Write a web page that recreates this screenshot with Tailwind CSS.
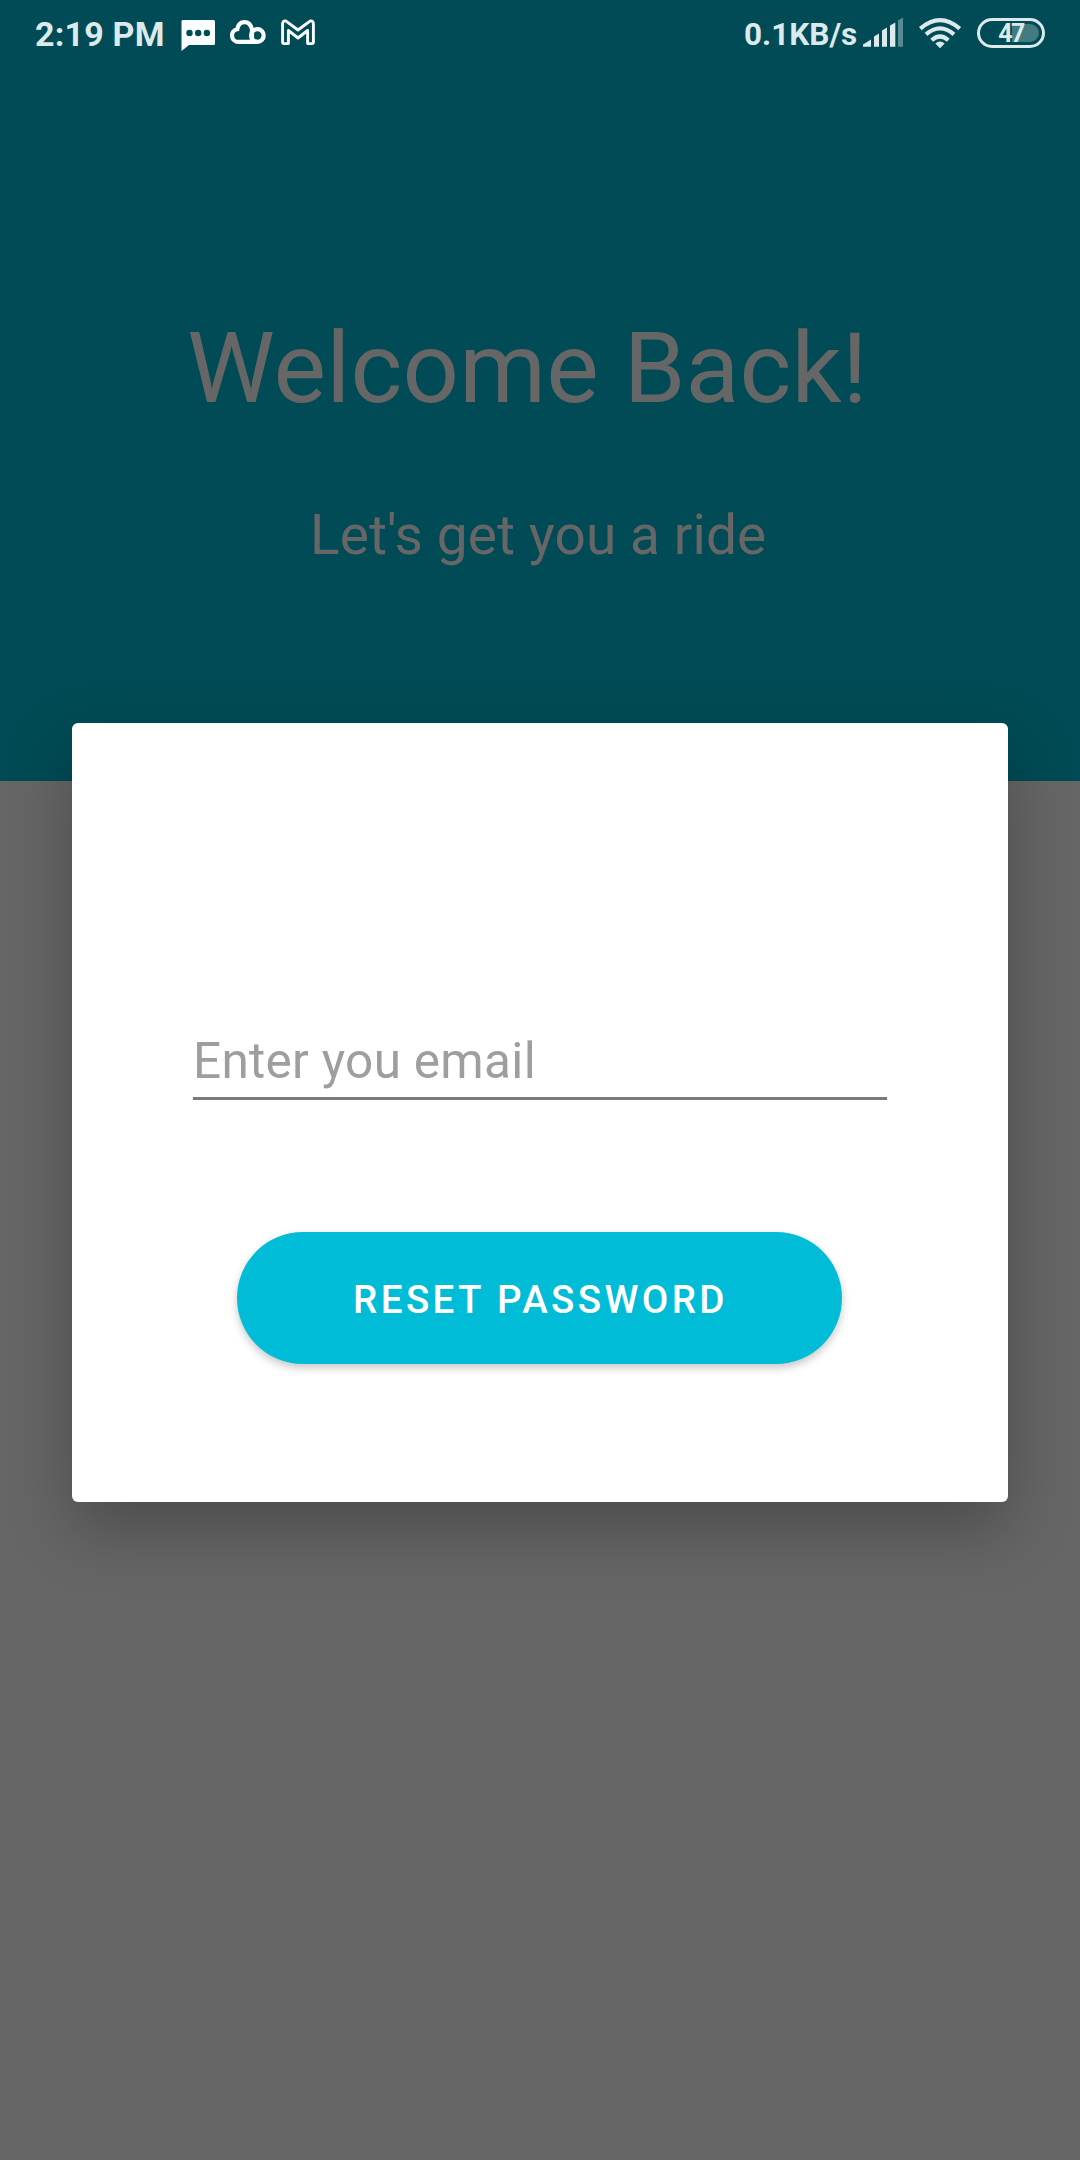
<!DOCTYPE html>
<html lang="en">
<head>
<meta charset="utf-8">
<title>Reset password</title>
<script src="https://cdn.jsdelivr.net/npm/@tailwindcss/browser@4"></script>
</head>
<body class="font-['Roboto',sans-serif]">
<div class="relative h-[2160px] w-[1080px] overflow-hidden bg-[#666666]">
  <header class="h-[781px] bg-[#004b55]">
    <div class="flex h-[68px] items-start justify-between pl-[35px] pr-[35px] text-[#dceaeb]">
      <div class="flex items-start">
        <span class="w-[146px] whitespace-nowrap text-[34px] font-bold leading-[68px] tracking-[0.2px]">2:19 PM</span>
        <svg class="h-[68px] w-[34px]" viewBox="181 0 34 68" fill="none">
          <path fill="#fafefe" fill-rule="evenodd" d="M182.500 20H213.500Q215 20 215 21.500V43.500Q215 45 213.500 45H189L181.500 51V21.500Q181.500 20 182.500 20ZM189.500 29.800a3.200 3.200 0 1 0 0 6.400a3.200 3.200 0 1 0 0-6.400ZM198.200 29.800a3.200 3.200 0 1 0 0 6.400a3.200 3.200 0 1 0 0-6.400ZM206.900 29.800a3.200 3.200 0 1 0 0 6.400a3.200 3.200 0 1 0 0-6.400Z"/>
        </svg>
        <svg class="ml-[15px] h-[68px] w-[36px]" viewBox="230 0 36 68" fill="none" stroke="#fafefe" stroke-width="4.200">
          <path d="M257.500 41.900H238.500A6.400 6.400 0 0 1 237.300 29.200Q238.500 22.100 244.500 22.100Q250.500 22.100 252 29.500V41"/>
          <circle cx="257.400" cy="35.500" r="6.300"/>
        </svg>
        <svg class="ml-[15px] h-[68px] w-[34px]" viewBox="281 0 34 68" fill="none" stroke="#fafefe" stroke-width="2.900" stroke-linejoin="round">
          <path d="M282.600 24Q282.600 20.500 285.700 20.900L298 30L310.300 20.900Q313.400 20.500 313.400 24V42Q313.400 43.600 312 43.600H307.600V30.500L298 38L288.400 30.500V43.600H284Q282.600 43.600 282.600 42Z"/>
        </svg>
      </div>
      <div class="flex items-start">
        <span class="w-[119px] whitespace-nowrap text-[31.500px] font-bold leading-[69px]">0.1KB/s</span>
        <svg class="h-[68px] w-[41px]" viewBox="863 0 41 68" fill="currentColor">
          <path d="M863 46.700V44.500L871 39.500V46.700ZM874 46.700V36.500L879 33.500V46.700ZM882 46.700V30.500L887 27.500V46.700ZM890 46.700V25.500L895.300 22.500V46.700Z"/>
          <path class="opacity-40" d="M898 46.700V20.500L903 17.500V46.700Z"/>
        </svg>
        <svg class="ml-[15px] h-[68px] w-[43px]" viewBox="919 0 43 68" fill="none" stroke="currentColor" stroke-width="4.200">
          <path d="M920.300 28.600Q940 11.700 959.700 28.600M926 34.400Q940 22.300 954 34.400M931.700 40.200Q940 32.800 948.300 40.200"/>
          <path fill="currentColor" stroke="none" d="M940 48.300L935.300 43.500Q940 39.300 944.700 43.500Z"/>
        </svg>
        <div class="relative ml-[15px] mt-[18px] h-[30px] w-[68px] rounded-full border-[3px] border-current">
          <div class="ml-[32px] mt-[3px] h-[18px] w-[27px] rounded-r-full bg-current/30"></div>
          <span class="absolute inset-0 text-center text-[25px] font-bold leading-[26px] tracking-[-1.500px]">47</span>
        </div>
      </div>
    </div>
    <h1 class="mt-[240px] pl-[187px] text-[99px] leading-[120px] tracking-[0.200px] text-[#666666]">Welcome Back!</h1>
    <p class="mt-[77px] pl-[310px] text-[55px] leading-[60px] tracking-[0.080px] text-[#666666]">Let's get you a ride</p>
  </header>

  <main class="absolute left-[72px] top-[723px] h-[779px] w-[936px] rounded-[6px] bg-white px-[121px] pt-[300px] shadow-[0_28px_66px_rgba(0,0,0,0.26)]">
    <div class="h-[77px] w-[694px] border-b-[3px] border-[#7a7a7a] text-[49.500px] leading-[77px] tracking-[0.300px] text-[#9e9e9e]">Enter you email</div>
    <button class="ml-[44px] mt-[132px] block h-[132px] w-[605px] rounded-full bg-[#00bcd7] pl-[2px] pt-[3px] text-[38.500px] font-medium tracking-[3.400px] text-white shadow-[0_4px_8px_rgba(0,0,0,0.22)]">RESET PASSWORD</button>
  </main>
</div>
</body>
</html>
